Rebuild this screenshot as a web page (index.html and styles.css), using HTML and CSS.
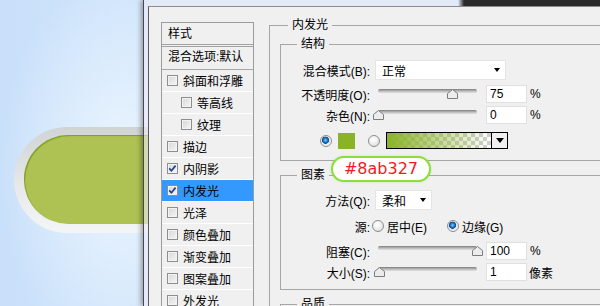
FILE: index.html
```html
<!DOCTYPE html>
<html lang="zh-CN">
<head>
<meta charset="utf-8">
<title>图层样式 - 内发光</title>
<link rel="stylesheet" href="styles.css">
</head>
<body>
<div class="scene">
  <div class="backdrop">
    <div class="pill-ring"><div class="pill"></div></div>
  </div>

  <div class="window">
    <div class="client">
      <div class="styles">
        <div class="sty-head">样式</div>
        <div class="sty-blend">混合选项:默认</div>
        <div class="sty-item"><span class="cb"></span>斜面和浮雕</div>
        <div class="sty-item sub"><span class="cb"></span>等高线</div>
        <div class="sty-item sub"><span class="cb"></span>纹理</div>
        <div class="sty-item"><span class="cb"></span>描边</div>
        <div class="sty-item"><span class="cb on"><svg viewBox="0 0 11 11" width="11" height="11"><path d="M2.2 5.4 L4.4 7.8 L8.6 2.6" fill="none" stroke="#24408c" stroke-width="1.7"/></svg></span>内阴影</div>
        <div class="sty-item sel"><span class="cb on"><svg viewBox="0 0 11 11" width="11" height="11"><path d="M2.2 5.4 L4.4 7.8 L8.6 2.6" fill="none" stroke="#24408c" stroke-width="1.7"/></svg></span>内发光</div>
        <div class="sty-item"><span class="cb"></span>光泽</div>
        <div class="sty-item"><span class="cb"></span>颜色叠加</div>
        <div class="sty-item"><span class="cb"></span>渐变叠加</div>
        <div class="sty-item"><span class="cb"></span>图案叠加</div>
        <div class="sty-item"><span class="cb"></span>外发光</div>
      </div>

      <div class="panel">
        <fieldset class="group outer">
          <legend>内发光</legend>

          <fieldset class="group inner struct">
            <legend>结构</legend>
            <div class="row r-blend">
              <span class="lbl">混合模式(B):</span>
              <div class="select wide"><span>正常</span><i class="arrow"></i></div>
            </div>
            <div class="row r-opacity">
              <span class="lbl">不透明度(O):</span>
              <div class="slider" style="--v:75">
                <span class="track"></span>
                <svg class="thumb" viewBox="0 0 11 10" width="11" height="10"><path d="M0.5 4.5 L5.5 0.5 L10.5 4.5 L10.5 9.5 L0.5 9.5 Z" fill="#ececec" stroke="#7c7c7c"/></svg>
              </div>
              <div class="num">75</div>
              <span class="unit">%</span>
            </div>
            <div class="row r-noise">
              <span class="lbl">杂色(N):</span>
              <div class="slider" style="--v:0">
                <span class="track"></span>
                <svg class="thumb" viewBox="0 0 11 10" width="11" height="10"><path d="M0.5 4.5 L5.5 0.5 L10.5 4.5 L10.5 9.5 L0.5 9.5 Z" fill="#ececec" stroke="#7c7c7c"/></svg>
              </div>
              <div class="num">0</div>
              <span class="unit">%</span>
            </div>
            <div class="row r-color">
              <span class="radio on"></span>
              <span class="swatch"></span>
              <span class="radio"></span>
              <div class="grad"><span class="grad-fill"></span><span class="grad-btn"><i class="arrow"></i></span></div>
            </div>
          </fieldset>

          <fieldset class="group inner elem">
            <legend>图素</legend>
            <div class="row r-method">
              <span class="lbl">方法(Q):</span>
              <div class="select narrow"><span>柔和</span><i class="arrow"></i></div>
            </div>
            <div class="row r-source">
              <span class="lbl">源:</span>
              <span class="opt first"><span class="radio"></span>居中(E)</span>
              <span class="opt"><span class="radio on"></span>边缘(G)</span>
            </div>
            <div class="row r-choke">
              <span class="lbl">阻塞(C):</span>
              <div class="slider" style="--v:100">
                <span class="track"></span>
                <svg class="thumb" viewBox="0 0 11 10" width="11" height="10"><path d="M0.5 4.5 L5.5 0.5 L10.5 4.5 L10.5 9.5 L0.5 9.5 Z" fill="#ececec" stroke="#7c7c7c"/></svg>
              </div>
              <div class="num">100</div>
              <span class="unit">%</span>
            </div>
            <div class="row r-size">
              <span class="lbl">大小(S):</span>
              <div class="slider" style="--v:1">
                <span class="track"></span>
                <svg class="thumb" viewBox="0 0 11 10" width="11" height="10"><path d="M0.5 4.5 L5.5 0.5 L10.5 4.5 L10.5 9.5 L0.5 9.5 Z" fill="#ececec" stroke="#7c7c7c"/></svg>
              </div>
              <div class="num">1</div>
              <span class="unit px">像素</span>
            </div>
          </fieldset>

          <fieldset class="group inner quality">
            <legend>品质</legend>
          </fieldset>
        </fieldset>
      </div>
    </div>
  </div>

  <div class="tip">#8ab327</div>
</div>
</body>
</html>
```

FILE: styles.css
```css
* { box-sizing: border-box; }

html, body {
  margin: 0;
  padding: 0;
}

body {
  width: 600px;
  height: 306px;
  overflow: hidden;
  font-family: "Liberation Sans", "Noto Sans CJK SC", sans-serif;
  font-size: 12px;
  color: #000;
}

.scene {
  position: relative;
  display: flex;
  width: 600px;
  height: 306px;
  overflow: hidden;
  background:
    radial-gradient(ellipse 120px 200px at 120px 170px, rgba(240, 248, 255, 0.85), rgba(240, 248, 255, 0) 100%),
    linear-gradient(90deg, #c9e0fa 0%, #d8eafd 50%, #e9f5ff 100%);
}

/* ---------- backdrop with the green pill ---------- */
.backdrop {
  flex: none;
  width: 143px;
  padding: 127px 0 0 14px;
}

.pill-ring {
  width: 170px;
  height: 106px;
  padding: 8px 0 9px 10px;
  border-radius: 53px 0 0 53px;
  background: linear-gradient(#d1d4d6, #e6e8e9 55%, #f4f5f6);
}

.pill {
  height: 89px;
  border-radius: 44.5px 0 0 44.5px;
  background: #adc252;
  box-shadow: inset 1px 1px 1px rgba(118, 150, 28, 0.85);
}

/* ---------- dialog window ---------- */
.window {
  position: relative;
  z-index: 1;
  flex: none;
  width: 520px;
  height: 306px;
  padding: 6px 0 0 4px;
  border-left: 1px solid #4a4a4a;
  background:
    linear-gradient(90deg, rgba(226, 234, 248, 0.95) 0, rgba(226, 234, 248, 0.95) 314px, #2a2a2a 320px) top left / 100% 6px no-repeat,
    rgba(238, 232, 248, 0.6);
  box-shadow: -2px 0 5px rgba(0, 0, 0, 0.35);
}

.client {
  display: flex;
  align-items: flex-start;
  height: 100%;
  padding: 10px 0 0 12px;
  border-left: 1px solid #5a5a5a;
  border-top: 1px solid #8c8c8c;
  background: #f0f0f0;
}

/* ---------- styles list ---------- */
.styles {
  flex: none;
  width: 93px;
  margin-top: 5px;
  border: 1px solid #9c9c9c;
  border-bottom: none;
}

.sty-head {
  height: 24px;
  padding: 3px 0 0 6px;
  line-height: 16px;
  border-bottom: 3px double #a2a2a2;
}

.sty-blend {
  height: 23px;
  padding-left: 6px;
  line-height: 20px;
  border-bottom: 1px solid #a8a8a8;
  white-space: nowrap;
}

.sty-item {
  display: flex;
  align-items: center;
  height: 22px;
  padding-left: 5px;
  border-bottom: 1px solid #ffffff;
  white-space: nowrap;
}

.sty-item.sub { padding-left: 19px; }

.sty-item.sel { background: #3399ff; }

.cb {
  flex: none;
  width: 11px;
  height: 11px;
  margin-right: 5px;
  border: 1px solid #8e8e8e;
  background: linear-gradient(135deg, #d6d6d6, #f7f7f7);
  box-shadow: inset 0 0 0 1px #f3f3f3;
  position: relative;
}

.cb svg {
  position: absolute;
  left: -1px;
  top: -1px;
}

/* ---------- right panel ---------- */
.panel {
  flex: none;
  margin-left: 15px;
}

.group {
  margin: 0;
  padding: 0;
  min-width: 0;
  border: 1px solid #a6a6a6;
}

.group > legend {
  padding: 0 4px;
  line-height: 16px;
  height: 16px;
}

.outer {
  width: 420px;
  height: 300px;
}

.outer > legend { margin-left: 18px; }

.inner {
  width: 400px;
  margin-left: 10px;
}

.inner > legend { margin-left: 16px; }

.struct {
  margin-top: 3px;
  padding: 8px 0 11px 0;
}

.elem {
  margin-top: 6px;
  padding: 7px 0 8px 0;
}

.quality {
  margin-top: 6px;
  height: 40px;
}

/* rows */
.row {
  display: flex;
  align-items: center;
  white-space: nowrap;
}

.lbl {
  flex: none;
  width: 89px;
  margin-right: 5px;
  text-align: right;
}

.r-blend { height: 20px; }
.r-opacity { height: 18px; margin-top: 5px; }
.r-noise { height: 18px; margin-top: 3px; }
.r-color { height: 17px; margin-top: 8px; padding-left: 39px; }

.r-method { height: 20px; }
.r-source { height: 16px; margin-top: 8px; }
.r-choke { height: 18px; margin-top: 8px; }
.r-size { height: 18px; margin-top: 3px; }

/* select */
.select {
  display: flex;
  align-items: center;
  justify-content: space-between;
  height: 20px;
  padding: 0 5px 0 6px;
  background: #fff;
  border: 1px solid #e4e4e4;
}

.select.wide { width: 131px; }
.select.narrow { width: 57px; }

.arrow {
  display: block;
  width: 0;
  height: 0;
  border-left: 3.5px solid transparent;
  border-right: 3.5px solid transparent;
  border-top: 4px solid #000;
}

/* slider */
.slider {
  position: relative;
  flex: none;
  width: 105px;
  height: 18px;
  margin-right: 6px;
}

.track {
  position: absolute;
  left: 3px;
  top: 4px;
  width: 99px;
  height: 4px;
  border-radius: 2px;
  background: linear-gradient(#7b7b7b, #b9b9b9 50%, #e2e2e2);
}

.thumb {
  position: absolute;
  top: 4px;
  left: calc(3px + var(--v) * 0.99px - 5.5px);
}

.num {
  flex: none;
  width: 41px;
  height: 18px;
  padding-left: 3px;
  line-height: 16px;
  background: #fff;
  border: 1px solid #e0e0e0;
}

.unit { margin-left: 3px; }
.unit.px { margin-left: 2px; }

/* radios */
.radio {
  flex: none;
  display: inline-block;
  width: 12px;
  height: 12px;
  border-radius: 50%;
  border: 1px solid #8d8d8d;
  background: radial-gradient(circle at 40% 35%, #ffffff 0, #f2f2f2 40%, #d4d4d4 100%);
}

.radio.on {
  background: radial-gradient(circle at 45% 42%, #7fd0ff 0, #2384d4 1.8px, #0c4c94 3.3px, #e8e8e8 3.9px, #f8f8f8 100%);
}

.swatch {
  flex: none;
  width: 17px;
  height: 16px;
  margin: 0 13px 0 6px;
  background: #8ab327;
}

.grad {
  flex: none;
  display: flex;
  width: 122px;
  height: 17px;
  margin-left: 6px;
  border: 1px solid #000;
}

.grad-fill {
  flex: 1;
  background:
    linear-gradient(90deg, #8ab327 0%, rgba(138, 179, 39, 0.55) 45%, rgba(138, 179, 39, 0) 100%),
    repeating-conic-gradient(#cfcfcf 0 25%, #ffffff 0 50%) 0 0 / 8px 8px;
}

.grad-btn {
  flex: none;
  display: flex;
  align-items: center;
  justify-content: center;
  width: 16px;
  border-left: 1px solid #000;
  background: #f0f0f0;
}

.grad-btn .arrow {
  border-left-width: 4px;
  border-right-width: 4px;
  border-top-width: 5px;
}

/* source options */
.opt {
  display: flex;
  align-items: center;
}

.opt .radio { margin-right: 3px; }

.opt.first {
  width: 75px;
  margin-left: -3px;
}

/* ---------- annotation bubble ---------- */
.tip {
  position: absolute;
  left: 331px;
  top: 156px;
  z-index: 2;
  width: 100px;
  height: 26px;
  border: 2px solid #8cde3c;
  border-radius: 13px;
  background: #fff;
  color: #f21a1a;
  font-family: "DejaVu Sans", sans-serif;
  font-size: 16px;
  line-height: 22px;
  text-align: center;
  box-shadow: 0 0 2px rgba(140, 222, 60, 0.5);
}
```
